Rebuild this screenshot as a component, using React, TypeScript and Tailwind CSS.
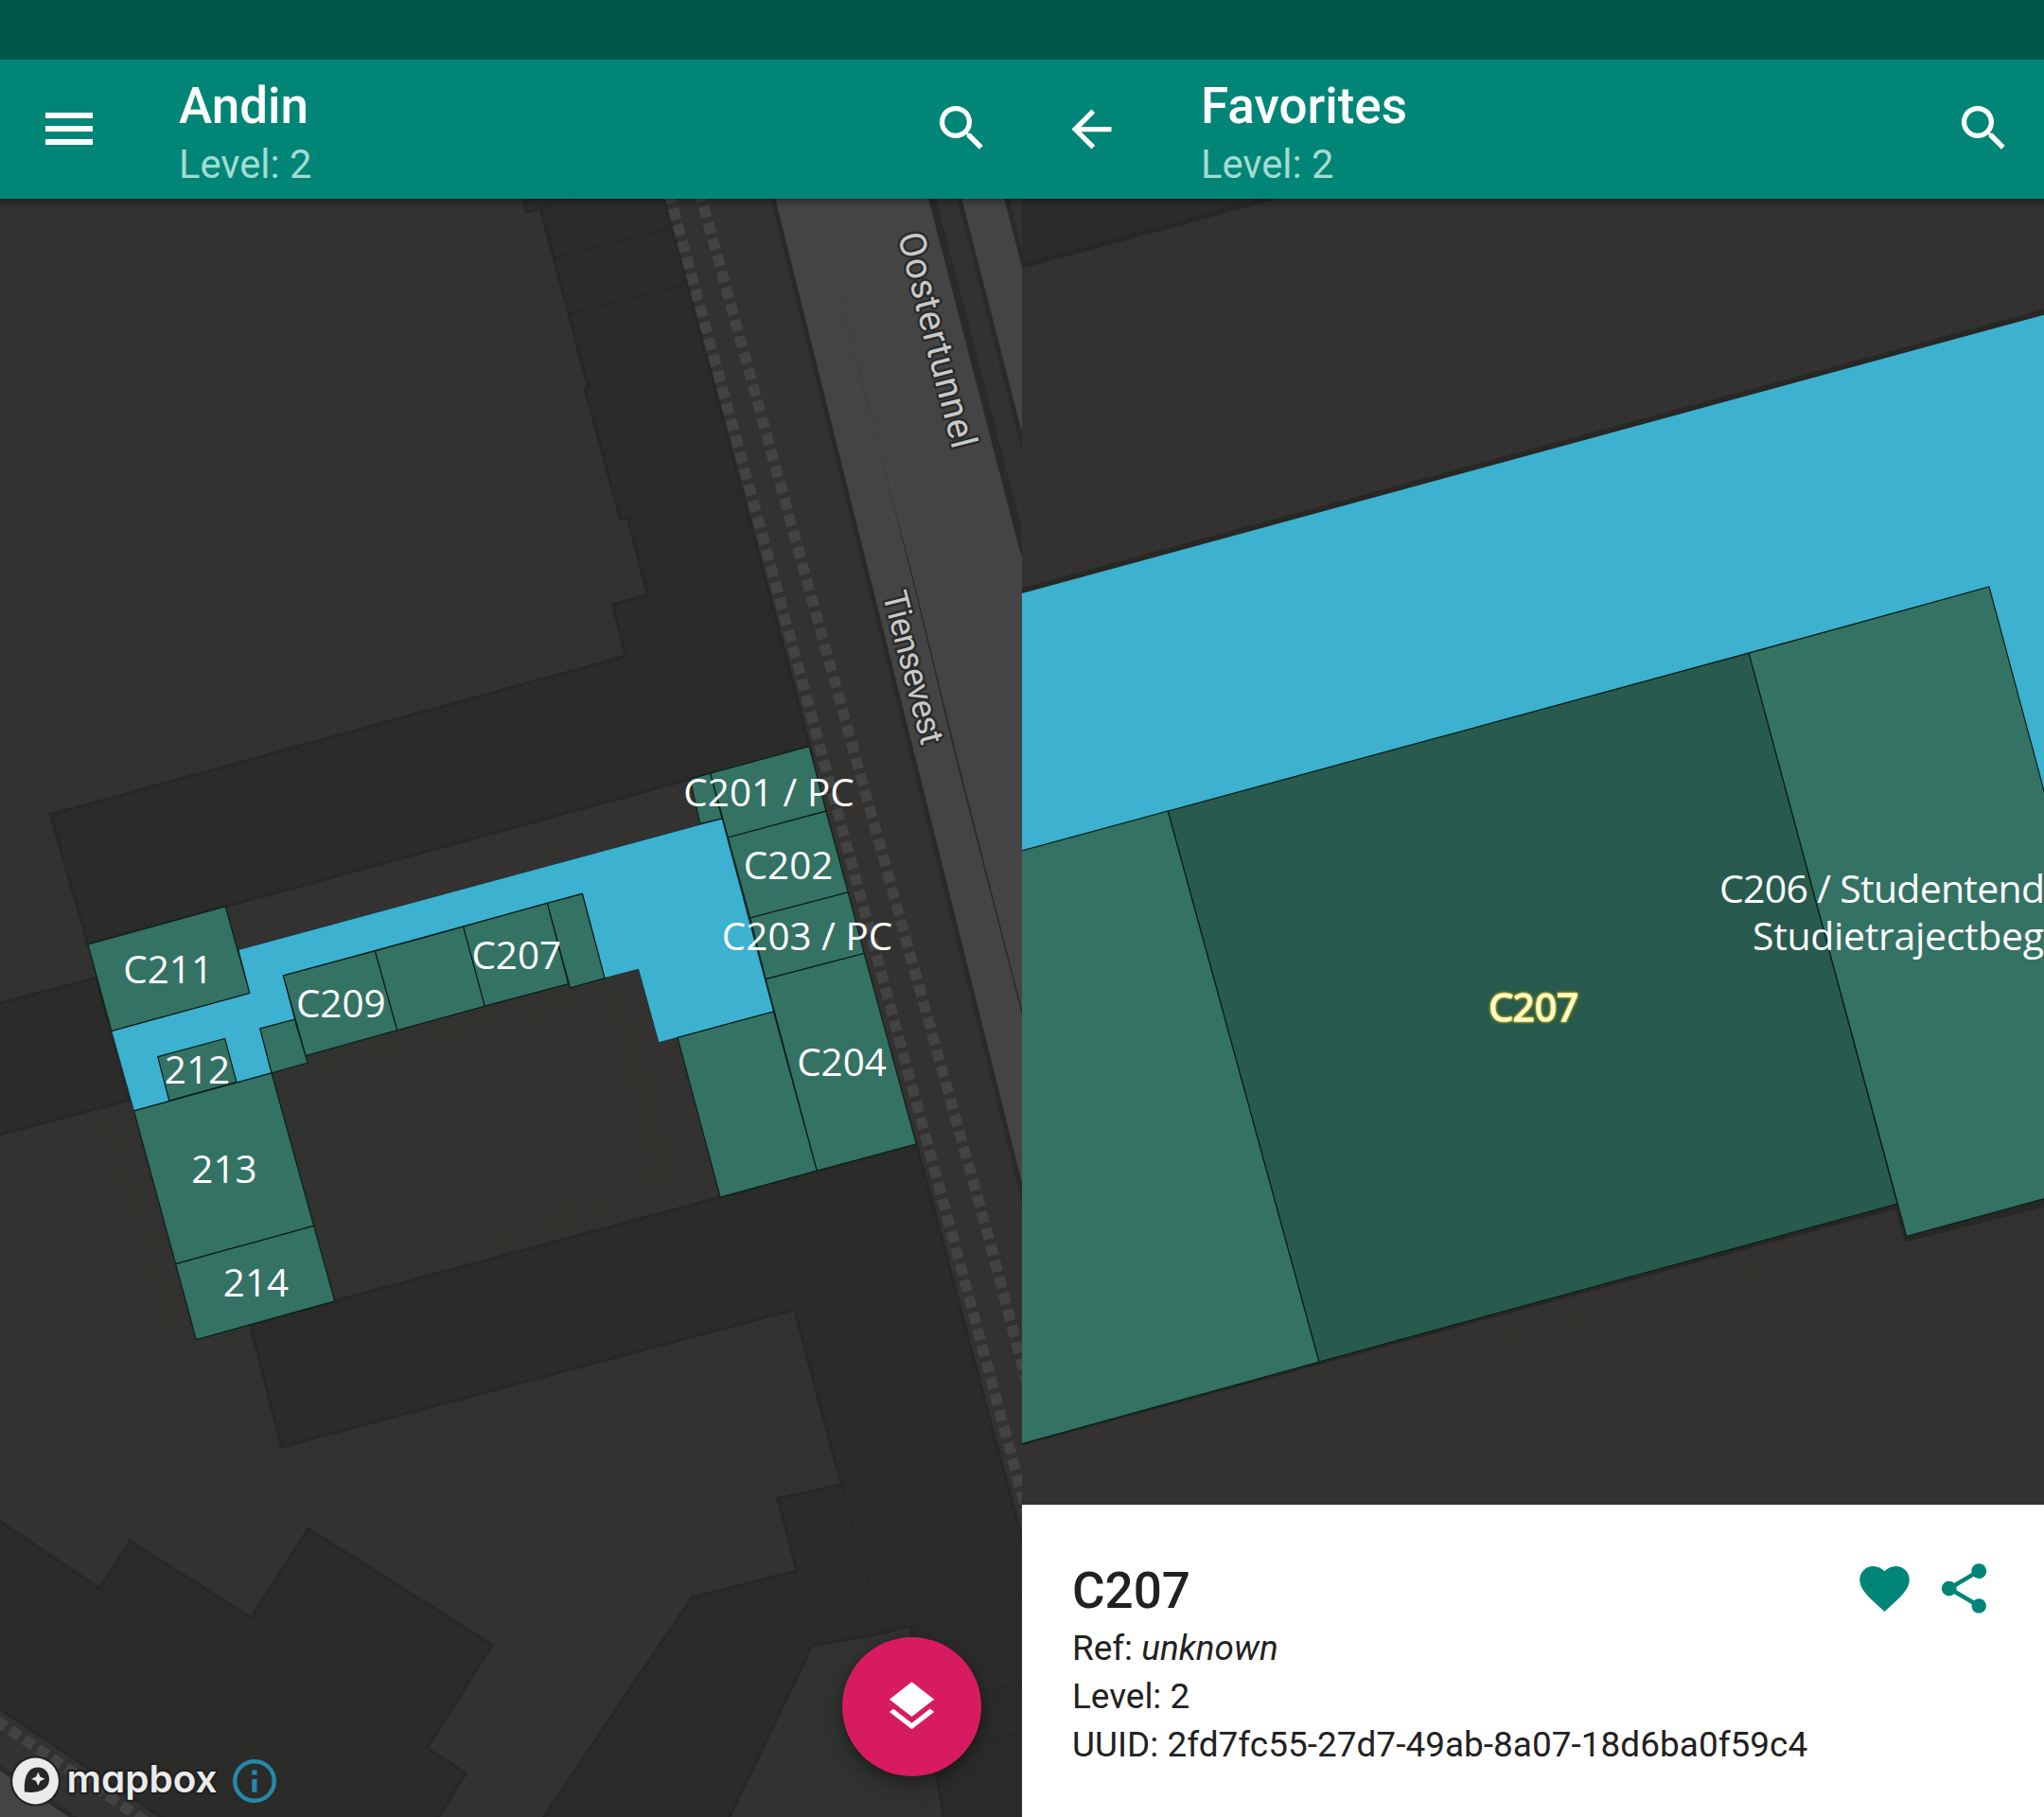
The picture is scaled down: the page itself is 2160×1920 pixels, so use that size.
import React from "react";
import { MdArrowBack, MdFavorite, MdLayers, MdSearch, MdShare } from "react-icons/md";

const BUILDINGS = [
  "553,205 556.2,224.5 571.3,220.3 621.6,409.3 617.8,410.1 655.7,549 663,546.7 684.6,628.6 647.4,638.9 661.2,693.2 53.4,860.8 93,998 238.3,958 729.3,823.2 858.6,800 701,205",
  "-4,1061 101.6,1033.4 137,1162.2 -4,1200",
  "353.7,1374.8 761,1265 968.3,1208.9 992.9,1300 1038.7,1472.8 1084,1640 1084,1930 999,1930 962.2,1718 932.6,1725.9 858.2,1738.9 766,1930 568,1930 730.8,1688.3 842,1659.8 822,1583.5 889.2,1568.9 839.6,1383.8 297.6,1528.8 264.5,1400",
  "-4,1605 105.4,1678.6 137.4,1628.6 265.5,1709.6 325.8,1615.2 520,1738.2 451.2,1847.3 492.5,1873.9 457,1930 185,1930 -4,1803",
];

const WALLS: [string, number][] = [
  ["556,224.5 606,210", 1.3],
  ["585.8,272.3 707.7,240.9", 1.3],
  ["601,332 724.2,300.3", 1.3],
  ["621.6,409.3 743.9,377.5", 0.9],
  ["636.4,476.3 762.8,444.1", 0.5],
  ["663,546.7 782.1,514.5", 0.4],
  ["684.6,628.6 802.8,598.3", 0.6],
  ["889.2,1568.9 932.6,1725.9", 1],
  ["962.2,1718 1080,1684.7", 1],
  ["1036,1786 1080,1780.4", 1],
  ["1029,1840 1080,1832", 1],
];

const ROOMS = [
  "93,998 238.3,958 263.8,1049.4 117.8,1089.4",
  "166.7,1116.7 237.6,1097.4 250,1143.3 178.7,1163",
  "274.8,1086.9 311.3,1077.2 325.1,1123 287,1133.8",
  "299.3,1030.9 396.4,1004.8 419.8,1088.7 323,1115.5",
  "396.4,1004.8 489.7,979.1 512.3,1063.2 419.8,1088.7",
  "489.7,979.1 578.4,954.3 600.6,1039.6 512.3,1063.2",
  "578.4,954.3 615.4,944.3 639,1033.6 602.5,1043.9",
  "141.5,1173.8 287,1133.8 331.6,1295.4 185.6,1335.6",
  "185.6,1335.6 331.6,1295.4 353.7,1374.8 207.3,1415.6",
  "729.3,823.2 750.8,817.1 763,865 739.7,870.4",
  "750.8,817.1 855.1,788.6 872.9,857.1 769.3,885",
  "769.3,885 872.9,857.1 896.2,942.9 792.6,970",
  "792.6,970 896.2,942.9 913.2,1007.5 809.2,1034.6",
  "809.2,1034.6 913.2,1007.5 968.3,1208.9 863.2,1237.1",
  "817.4,1068.9 863.2,1237.1 761.1,1265 716,1096.4",
];

const CORRIDOR =
  "252,1003.5 763,865 817.4,1068.9 696,1101.8 674.6,1024.3 639,1033.6 615.4,944.3 299.3,1030.9 311.3,1077.2 274.8,1086.9 287,1133.8 141.5,1173.8 117.8,1089.4 263.8,1049.4";

const LABELS: [string, number, number][] = [
  ["C211", 177.7, 1024.5],
  ["C209", 360.3, 1060],
  ["C207", 545.8, 1009.5],
  ["212", 208.5, 1130.5],
  ["213", 237, 1235],
  ["214", 270.5, 1355.5],
  ["C201 / PC", 812.5, 837],
  ["C202", 833, 914],
  ["C203 / PC", 853, 989],
  ["C204", 889.5, 1122],
];

function AppBar({ title, icon }: { title: string; icon: React.ReactNode }) {
  return (
    <header className="shrink-0">
      <div className="h-[63px] bg-[#00574b]" />
      <div className="flex h-[147px] items-center bg-[#008577] pr-[32px] pl-[42px] text-white">
        <div className="flex size-[63px] items-center justify-center">{icon}</div>
        <div className="ml-[84px] flex flex-1 flex-col pt-[5px]">
          <h1 className="text-[53px] leading-[62px] font-medium">{title}</h1>
          <p className="mt-[6px] text-[41.7px] leading-[49px] text-[#a3dcd2]">Level: 2</p>
        </div>
        <MdSearch className="mb-[2px] size-[63px]" />
      </div>
    </header>
  );
}

function MenuIcon() {
  return (
    <div className="mr-[1px] mb-[1px] flex w-[50px] flex-col gap-2">
      <span className="h-[6px] bg-white" />
      <span className="h-[6px] bg-white" />
      <span className="h-[6px] bg-white" />
    </div>
  );
}

function BuildingMap() {
  return (
    <svg viewBox="0 210 1080 1710" className="block h-[1710px] w-[1080px]">
      <defs>
        <filter id="soft" x="-20%" y="-20%" width="140%" height="140%" colorInterpolationFilters="sRGB">
          <feGaussianBlur stdDeviation="12" />
        </filter>
        <linearGradient id="barShade" x1="0" y1="0" x2="0" y2="1">
          <stop offset="0" stopColor="#000" stopOpacity="0.3" />
          <stop offset="1" stopColor="#000" stopOpacity="0" />
        </linearGradient>
      </defs>
      <rect y="210" width="1080" height="1710" fill="#343230" />

      {/* grass */}
      <g fill="#313330" filter="url(#soft)">
        <polygon points="-60,150 560,150 700,640 650,700 70,860 100,1040 -60,1080" />
        <polygon points="-60,1190 110,1180 180,1400 300,1400 300,1520 850,1370 900,1580 1010,1960 -60,1960" />
        <polygon points="290,1130 650,1045 700,1245 350,1380" />
      </g>

      {/* roads */}
      <g fill="#444444" stroke="#2a2a2a" strokeWidth="5">
        <polygon points="813,195 981,195 1100,655 1100,1340" />
        <polygon points="1010,195 1060,195 1100,350 1100,545" />
        <polygon points="-6,1864 92,1930 -6,1930" />
      </g>
      <line x1="984" y1="205" x2="1082" y2="583" stroke="#2a2a2a" strokeWidth="8" />
      <polygon points="884,299 919,437 963.5,605 1011.5,800 1080,1067 1080,1073 1009.5,800 962.3,605" fill="#2c2c2c" />

      <g fill="#2b2b29" stroke="#272725" strokeWidth="3">
        {BUILDINGS.map((p) => (
          <polygon key={p} points={p} />
        ))}
      </g>
      <g stroke="#262624" fill="none">
        {WALLS.map(([p, w]) => (
          <polyline key={p} points={p} strokeWidth={w} />
        ))}
      </g>

      {/* footpaths */}
      <g fill="none" stroke="#434343" strokeWidth="11.5" strokeDasharray="12 5.78">
        <path d="M706.8 203.2 L863.3 777.3 L1008.6 1313.6 L1090 1617" />
        <path d="M738.8 201 L898.5 780 L1045.6 1311 L1090 1480" />
        <path d="M-4 1818 L156 1926" />
      </g>

      <polygon points={CORRIDOR} fill="#3cb1d0" stroke="#1c3238" strokeWidth="1" />
      <g fill="#347264" stroke="#0b1f1a" strokeWidth="1.2">
        {ROOMS.map((p) => (
          <polygon key={p} points={p} />
        ))}
      </g>

      <g className="font-['Open_Sans']" fontSize="40.4" fill="#fff" textAnchor="middle">
        {LABELS.map(([t, x, y]) => (
          <text key={t} x={x} y={y + 14.7}>
            {t}
          </text>
        ))}
      </g>
      <g
        className="font-['Roboto']"
        fill="#c9c9c9"
        stroke="#2b2b2b"
        strokeWidth="5"
        paintOrder="stroke"
        strokeLinejoin="round"
      >
        <text transform="translate(948.5 249) rotate(75.6)" fontSize="39" textLength="234" lengthAdjust="spacing">
          Oostertunnel
        </text>
        <text transform="translate(932.5 628) rotate(75.5)" fontSize="36" textLength="166" lengthAdjust="spacing">
          Tiensevest
        </text>
      </g>
      <rect y="210" width="1080" height="10" fill="url(#barShade)" />
    </svg>
  );
}

function MapboxMark() {
  return (
    <div className="absolute bottom-[11px] left-[10px] flex h-[54px] items-center">
      <svg viewBox="0 0 54 54" className="size-[54px]">
        <circle cx="27.5" cy="27" r="26.5" fill="#222" />
        <circle cx="27.5" cy="27" r="24.4" fill="#ebebeb" />
        <path d="M16 38.5 C15 28 17 12.5 30 12.5 C37 12.5 42 18 42 25 C42 38 27 40 16 38.5 Z" fill="#262626" />
        <path d="M30.3 17.5 L32.5 22.5 L37.5 24.7 L32.5 26.9 L30.3 32 L28.1 26.9 L23.1 24.7 L28.1 22.5 Z" fill="#ebebeb" />
      </svg>
      <svg viewBox="0 0 170 64" className="-my-[5px] h-[64px] w-[170px] overflow-visible">
        <text
          x="6.5"
          y="43.5"
          fontSize="40"
          fontWeight="600"
          textLength="159"
          lengthAdjust="spacingAndGlyphs"
          fill="#ebebeb"
          stroke="#222"
          strokeWidth="5"
          strokeLinejoin="round"
          paintOrder="stroke"
          className="font-['Inter'] [font-feature-settings:'cv11']"
        >
          mapbox
        </text>
      </svg>
      <svg viewBox="0 0 48 48" className="ml-[10.5px] size-[48px]">
        <circle cx="24" cy="24" r="20.8" fill="none" stroke="#2589a8" strokeWidth="4.4" />
        <rect x="21.3" y="12.5" width="5.2" height="5" fill="#2589a8" />
        <rect x="21.3" y="21.8" width="5.2" height="14" fill="#2589a8" />
      </svg>
    </div>
  );
}

function FavoriteMap() {
  return (
    <svg viewBox="0 210 1080 1380" className="block h-[1380px] w-[1080px]">
      <defs>
        <linearGradient id="ground" gradientUnits="userSpaceOnUse" x1="480" y1="1405" x2="491" y2="1446">
          <stop offset="0" stopColor="#343230" />
          <stop offset="1" stopColor="#313330" />
        </linearGradient>
        <linearGradient id="favShade" x1="0" y1="0" x2="0" y2="1">
          <stop offset="0" stopColor="#000" stopOpacity="0.3" />
          <stop offset="1" stopColor="#000" stopOpacity="0" />
        </linearGradient>
      </defs>
      <rect y="210" width="1080" height="1380" fill="url(#ground)" />
      <polygon points="-10,284 280,205 -10,205" fill="#2b2b29" stroke="#272725" strokeWidth="5" />
      <polygon
        points="-10,627 1090,327 1090,1270 934.7,1309 925,1274 314,1439 -10,1527"
        fill="#272725"
        stroke="#272725"
        strokeWidth="6"
      />
      <polygon points="-10,629.7 1090,330 1090,875 1022,620 -10,902" fill="#3cb1d0" />
      <g fill="#347264" stroke="#0b1f1a" strokeWidth="1.2">
        <polygon points="-10,901.5 154.3,857 314,1439 -10,1528.5" />
        <polygon points="768,690.2 1022,620 1090,873 1090,1264 934.7,1306.4" />
        <polygon points="154.3,857 768,690.2 925,1272 314,1439" fill="#285b4e" />
      </g>
      <g className="font-['Open_Sans']" fontSize="41" fill="#fff">
        <text x="737" y="953.5" textLength="344">
          C206 / Studentend
        </text>
        <text x="772" y="1004.3" textLength="308">
          Studietrajectbeg
        </text>
        <text
          x="540.8"
          y="1078.7"
          fontSize="40.4"
          textAnchor="middle"
          fill="#fffbd6"
          stroke="#fff7c0"
          strokeWidth="1.6"
          className="[filter:drop-shadow(0_0_1px_#d8c400)_drop-shadow(0_0_1px_#a89a10)]"
        >
          C207
        </text>
      </g>
      <rect y="210" width="1080" height="10" fill="url(#favShade)" />
    </svg>
  );
}

export default function App() {
  return (
    <div className="flex h-[1920px] w-[2160px] overflow-hidden font-['Roboto',sans-serif]">
      <section className="relative flex w-[1080px] flex-col overflow-hidden">
        <AppBar title="Andin" icon={<MenuIcon />} />
        <BuildingMap />
        <MapboxMark />
        <button className="absolute right-[43px] bottom-[43px] flex size-[147px] items-center justify-center rounded-full bg-[#d81b60] text-white shadow-[0_10px_22px_rgba(0,0,0,0.3),0_2px_8px_rgba(0,0,0,0.2)]">
          <MdLayers className="size-[63px]" />
        </button>
      </section>
      <section className="flex w-[1080px] flex-col overflow-hidden">
        <AppBar title="Favorites" icon={<MdArrowBack className="size-[63px]" />} />
        <FavoriteMap />
        <div className="flex flex-1 items-start justify-between bg-white pt-[57px] pr-[53px] pl-[53px] text-[#212121]">
          <div>
            <h2 className="text-[53px] leading-[68px] font-medium">C207</h2>
            <div className="mt-[1px] text-[36.9px] leading-[51px]">
              <p>
                Ref: <em>unknown</em>
              </p>
              <p>Level: 2</p>
              <p className="tracking-[0.05px]">UUID: 2fd7fc55-27d7-49ab-8a07-18d6ba0f59c4</p>
            </div>
          </div>
          <div className="flex gap-[21px] text-[#008577]">
            <MdFavorite className="size-[63px]" />
            <MdShare className="size-[63px]" />
          </div>
        </div>
      </section>
    </div>
  );
}
